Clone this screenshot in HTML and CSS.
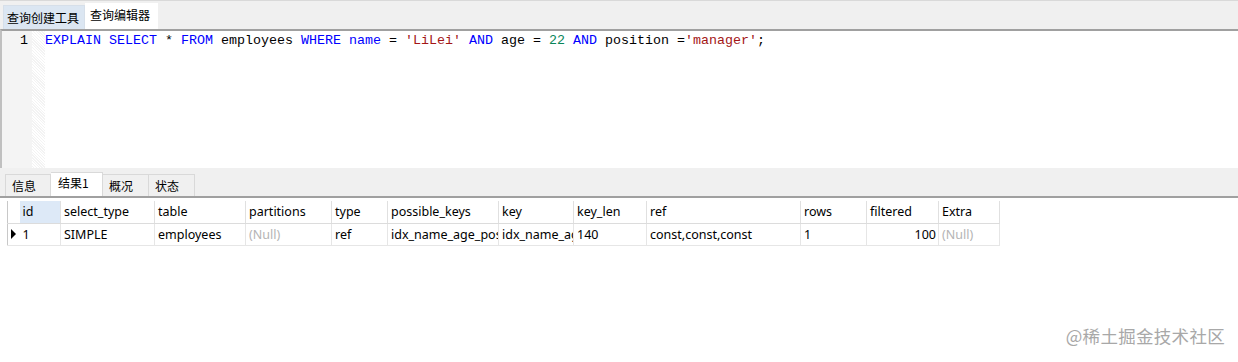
FILE: index.html
```html
<!DOCTYPE html>
<html lang="zh-CN">
<head>
    <meta charset="UTF-8">
    <title>查询编辑器</title>
    <link rel="stylesheet" href="styles.css">
</head>
<body>
    <div class="window">
        <div class="top-tabs">
            <div class="tab tab-builder">查询创建工具</div>
            <div class="tab tab-active">查询编辑器</div>
        </div>

        <div class="editor">
            <div class="gutter">
                <div class="line-no">1</div>
            </div>
            <div class="fold"></div>
            <div class="code"><span class="kw">EXPLAIN SELECT</span> * <span class="kw">FROM</span> employees <span class="kw">WHERE</span> <span class="kw">name</span> = <span class="str">'LiLei'</span> <span class="kw">AND</span> age = <span class="num">22</span> <span class="kw">AND</span> position =<span class="str">'manager'</span>;</div>
        </div>

        <div class="result-tabs">
            <div class="rtab">信息</div>
            <div class="rtab rtab-active">结果1</div>
            <div class="rtab">概况</div>
            <div class="rtab">状态</div>
        </div>

        <div class="result">
            <table class="grid">
                <thead>
                    <tr>
                        <th class="ind"></th>
                        <th class="c-id sel">id</th>
                        <th class="c-st">select_type</th>
                        <th class="c-tb">table</th>
                        <th class="c-pa">partitions</th>
                        <th class="c-ty">type</th>
                        <th class="c-pk">possible_keys</th>
                        <th class="c-ke">key</th>
                        <th class="c-kl">key_len</th>
                        <th class="c-rf">ref</th>
                        <th class="c-ro">rows</th>
                        <th class="c-fi">filtered</th>
                        <th class="c-ex">Extra</th>
                    </tr>
                </thead>
                <tbody>
                    <tr>
                        <td class="ind"><span class="arrow"></span></td>
                        <td>1</td>
                        <td>SIMPLE</td>
                        <td>employees</td>
                        <td class="null">(Null)</td>
                        <td>ref</td>
                        <td>idx_name_age_position</td>
                        <td>idx_name_age_position</td>
                        <td>140</td>
                        <td>const,const,const</td>
                        <td>1</td>
                        <td class="right">100</td>
                        <td class="null">(Null)</td>
                    </tr>
                </tbody>
            </table>
            <div class="watermark">@稀土掘金技术社区</div>
        </div>
    </div>
</body>
</html>
```

FILE: styles.css
```css
body {
    margin: 0;
    padding: 0;
    background-color: #ffffff;
    font-family: "Noto Sans", "Noto Sans CJK SC", sans-serif;
    font-size: 12.5px;
    color: #000;
}

.window {
    width: 1238px;
    height: 362px;
    overflow: hidden;
    display: flex;
    flex-direction: column;
}

/* top tab strip */
.top-tabs {
    height: 25px;
    padding: 3px 0 0 3px;
    background-color: #f0f0f0;
    border-top: 1px solid #d9d9d9;
    display: flex;
    align-items: flex-end;
    box-sizing: content-box;
}

.tab {
    height: 24px;
    line-height: 24px;
    padding: 0 4px;
    font-family: "Noto Sans CJK SC", sans-serif;
    font-size: 12px;
    box-sizing: border-box;
    white-space: nowrap;
}

.tab-builder {
    width: 82px;
    background-color: #dbe6f2;
    border: 1px solid #d6dfe9;
    border-bottom: none;
    padding-left: 3px;
}

.tab-active {
    width: 73px;
    height: 26px;
    line-height: 24px;
    background-color: #ffffff;
    padding: 0 5px;
}

/* editor */
.editor {
    height: 137px;
    display: flex;
    border-top: 2px solid #a0a0a0;
    border-left: 2px solid #c0c0c0;
    background-color: #ffffff;
}

.gutter {
    width: 30px;
    background-color: #f4f4f4;
}

.line-no {
    text-align: right;
    padding-right: 4px;
    font-family: "Liberation Mono", monospace;
    font-size: 13.33px;
    line-height: 15px;
    margin-top: 2px;
    color: #000;
}

.fold {
    width: 13px;
    background-color: #f3f3f3;
    background-image: repeating-linear-gradient(45deg, #ffffff 0 1px, transparent 1px 2px);
}

.code {
    font-family: "Liberation Mono", monospace;
    font-size: 13.33px;
    line-height: 15px;
    margin-top: 2px;
    white-space: nowrap;
    color: #000;
}

.kw {
    color: #0000ff;
}

.str {
    color: #a31515;
}

.num {
    color: #098658;
}

/* result tabs */
.result-tabs {
    height: 24px;
    padding: 4px 0 0 5px;
    background-color: #f0f0f0;
    border-bottom: 2px solid #a0a0a0;
    display: flex;
    align-items: flex-end;
    box-sizing: content-box;
}

.rtab {
    width: 46px;
    height: 22px;
    line-height: 21px;
    padding-left: 6px;
    box-sizing: border-box;
    border: 1px solid #d9d9d9;
    border-bottom: none;
    background-color: #f0f0f0;
    font-family: "Noto Sans CJK SC", sans-serif;
    font-size: 12px;
}

.rtab + .rtab {
    border-left: none;
}

.rtab-active {
    width: 52px;
    height: 24px;
    line-height: 20px;
    background-color: #ffffff;
    padding-left: 7px;
}

/* result grid */
.result {
    flex: 1;
    position: relative;
    padding: 3px 0 0 7px;
    background-color: #ffffff;
}

.grid {
    width: 992px;
    border-collapse: collapse;
    table-layout: fixed;
    border-left: 1px solid #c8c8c8;
}

.grid th,
.grid td {
    height: 22px;
    padding: 0 0 0 3px;
    border-right: 1px solid #e6e6e6;
    border-bottom: 1px solid #e6e6e6;
    text-align: left;
    font-weight: normal;
    white-space: nowrap;
    overflow: hidden;
    text-overflow: clip;
    box-sizing: border-box;
}

.grid th {
    border-right-color: #e0e0e0;
    border-bottom-color: #dcdcdc;
}

.grid th.sel {
    background-color: #dde9f7;
}

.grid .ind {
    width: 12px;
    padding: 0;
    border-right: none;
}

.arrow {
    display: block;
    width: 0;
    height: 0;
    margin-left: 3px;
    border-top: 5px solid transparent;
    border-bottom: 5px solid transparent;
    border-left: 5px solid #000;
}

.c-id { width: 41px; }
.c-st { width: 94px; }
.c-tb { width: 91px; }
.c-pa { width: 86px; }
.c-ty { width: 56px; }
.c-pk { width: 111px; }
.c-ke { width: 75px; }
.c-kl { width: 73px; }
.c-rf { width: 154px; }
.c-ro { width: 66px; }
.c-fi { width: 72px; }
.c-ex { width: 61px; }

.null {
    color: #b4b4b4;
}

.grid td.right {
    text-align: right;
    padding-right: 2px;
}

.watermark {
    position: absolute;
    right: 13px;
    bottom: 14px;
    font-family: "Noto Sans CJK SC", sans-serif;
    font-size: 17.5px;
    color: #a8a8a8;
    letter-spacing: 0.3px;
}
```
